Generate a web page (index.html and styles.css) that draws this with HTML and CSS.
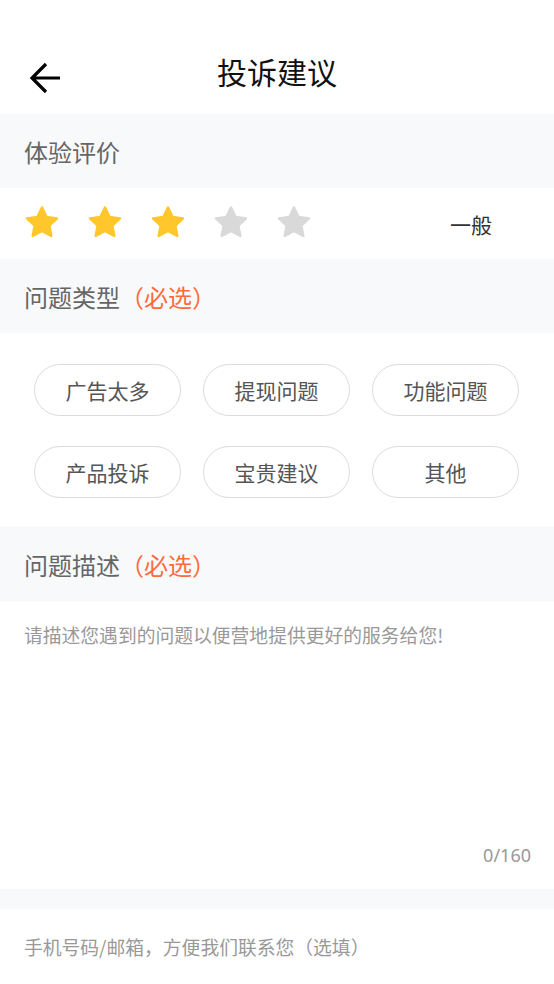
FILE: index.html
```html
<!DOCTYPE html>
<html lang="zh-CN">
<head>
<meta charset="utf-8">
<link rel="stylesheet" href="styles.css">
</head>
<body>
<div class="page">
  <header class="nav">
    <svg class="back" width="34" height="34" viewBox="0 0 34 34">
      <path d="M31 17H4M17 3L3 17L17 31" fill="none" stroke="#000" stroke-width="3.2"/>
    </svg>
    <h1 class="title">投诉建议</h1>
  </header>

  <div class="sec-head">体验评价</div>
  <div class="rating">
    <div class="stars">
      <svg class="star on" viewBox="0 0 36 34"><path d="M18 2.5 L22.6 12 L33 13.4 L25.4 20.7 L27.3 31 L18 26 L8.7 31 L10.6 20.7 L3 13.4 L13.4 12 Z" stroke-linejoin="round" stroke-width="2.5"/></svg>
      <svg class="star on" viewBox="0 0 36 34"><path d="M18 2.5 L22.6 12 L33 13.4 L25.4 20.7 L27.3 31 L18 26 L8.7 31 L10.6 20.7 L3 13.4 L13.4 12 Z" stroke-linejoin="round" stroke-width="2.5"/></svg>
      <svg class="star on" viewBox="0 0 36 34"><path d="M18 2.5 L22.6 12 L33 13.4 L25.4 20.7 L27.3 31 L18 26 L8.7 31 L10.6 20.7 L3 13.4 L13.4 12 Z" stroke-linejoin="round" stroke-width="2.5"/></svg>
      <svg class="star off" viewBox="0 0 36 34"><path d="M18 2.5 L22.6 12 L33 13.4 L25.4 20.7 L27.3 31 L18 26 L8.7 31 L10.6 20.7 L3 13.4 L13.4 12 Z" stroke-linejoin="round" stroke-width="2.5"/></svg>
      <svg class="star off" viewBox="0 0 36 34"><path d="M18 2.5 L22.6 12 L33 13.4 L25.4 20.7 L27.3 31 L18 26 L8.7 31 L10.6 20.7 L3 13.4 L13.4 12 Z" stroke-linejoin="round" stroke-width="2.5"/></svg>
    </div>
    <span class="rate-text">一般</span>
  </div>

  <div class="sec-head">问题类型<span class="req">（必选）</span></div>
  <div class="tags">
    <div class="tag">广告太多</div>
    <div class="tag">提现问题</div>
    <div class="tag">功能问题</div>
    <div class="tag">产品投诉</div>
    <div class="tag">宝贵建议</div>
    <div class="tag">其他</div>
  </div>

  <div class="sec-head">问题描述<span class="req">（必选）</span></div>
  <div class="desc">
    <div class="placeholder">请描述您遇到的问题以便营地提供更好的服务给您!</div>
    <div class="counter">0/160</div>
  </div>
  <div class="spacer"></div>
  <div class="contact">手机号码/邮箱，方便我们联系您（选填）</div>
</div>
</body>
</html>
```

FILE: styles.css
```css
* { box-sizing: border-box; margin: 0; padding: 0; }
html, body { background: #fff; }
body {
  font-family: "Noto Sans CJK SC", "Noto Sans", sans-serif;
  width: 554px;
  overflow: hidden;
}
.page { display: flex; flex-direction: column; }

.nav {
  height: 114px;
  position: relative;
  display: flex;
  align-items: center;
  justify-content: center;
  padding-top: 32px;
}
.back { position: absolute; left: 29px; top: 61px; }
.title {
  font-size: 30px;
  font-weight: 400;
  color: #111;
  line-height: 40px;
  margin-top: -4px;
}

.sec-head {
  height: 74px;
  background: #f8f9fb;
  display: flex;
  align-items: center;
  padding-left: 24px;
  font-size: 24px;
  color: #666;
}
.req { color: #ff6a3a; }

.rating {
  height: 71px;
  display: flex;
  align-items: center;
  padding-left: 24px;
  padding-right: 62px;
  justify-content: space-between;
}
.stars { display: flex; gap: 27px; margin-top: -3px; }
.star { width: 36px; height: 34px; }
.star.on path { fill: #ffc72c; stroke: #ffc72c; }
.star.off path { fill: #d9d9d9; stroke: #d9d9d9; }
.rate-text { font-size: 21px; color: #333; }

.tags {
  display: grid;
  grid-template-columns: repeat(3, 147px);
  column-gap: 22px;
  row-gap: 30px;
  padding: 31px 34px 29px;
}
.tag {
  height: 52px;
  border: 1.5px solid #dcdcdc;
  border-radius: 26px;
  display: flex;
  align-items: center;
  justify-content: center;
  font-size: 21px;
  color: #555;
}

.desc {
  height: 288px;
  display: flex;
  flex-direction: column;
  justify-content: space-between;
  padding: 20px 23px 22px 24px;
}
.placeholder { font-size: 18.8px; color: #999; line-height: 28px; }
.counter {
  align-self: flex-end;
  font-family: "Noto Sans", sans-serif;
  font-size: 18px;
  color: #999;
}
.spacer { height: 20px; background: #f8f9fb; }
.contact {
  height: 75px;
  display: flex;
  align-items: center;
  padding-left: 24px;
  font-size: 18.8px;
  color: #999;
}
```
